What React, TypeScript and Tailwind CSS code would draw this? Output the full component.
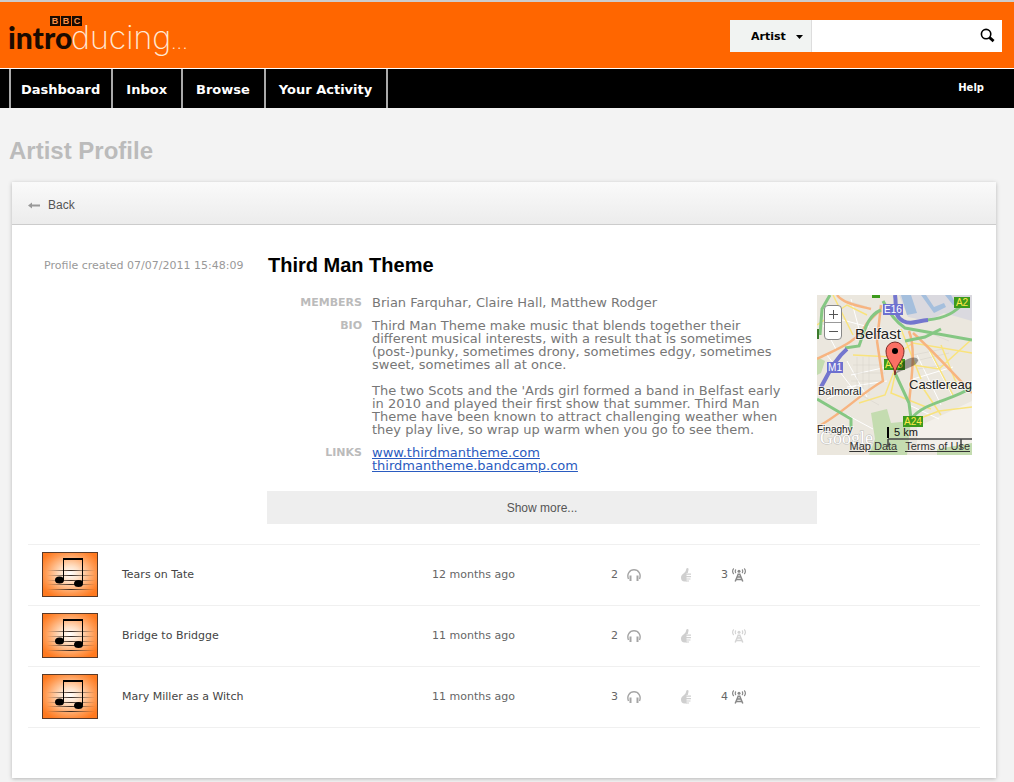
import React from "react";

const members = "Brian Farquhar, Claire Hall, Matthew Rodger";

const tracks = [
  { id: 1, title: "Tears on Tate", age: "12 months ago", listens: 2, plays: 3 },
  { id: 2, title: "Bridge to Bridgge", age: "11 months ago", listens: 2, plays: 0 },
  { id: 3, title: "Mary Miller as a Witch", age: "11 months ago", listens: 3, plays: 4 },
];

const navItems = ["Dashboard", "Inbox", "Browse", "Your Activity"];

const Logo = () => (
  <svg width="190" height="44" viewBox="0 0 190 44" role="img" aria-label="BBC Introducing">
    <text x="-1" y="35" fontSize="30" fontWeight="900" fill="#1a0a00" fontFamily="Lato, sans-serif">intro</text>
    <g fill="#1a0a00">
      <rect x="41" y="2" width="10" height="10" />
      <rect x="52" y="2" width="10" height="10" />
      <rect x="63" y="2" width="10" height="10" />
    </g>
    <g fill="#ff9248" fontSize="9" fontWeight="700" fontFamily="Liberation Sans, sans-serif" textAnchor="middle">
      <text x="46" y="10">B</text>
      <text x="57" y="10">B</text>
      <text x="68" y="10">C</text>
    </g>
    <text x="62" y="35" fontSize="32" fontWeight="200" fill="#ffe8d4" fontFamily="Inter, sans-serif">
      ducing<tspan fontSize="20">...</tspan>
    </text>
  </svg>
);

const NoteArt = () => (
  <svg width="56" height="45" viewBox="0 0 56 45" className="block">
    <defs>
      <radialGradient id="glow" cx="50%" cy="48%" r="60%">
        <stop offset="0" stopColor="#ffffff" />
        <stop offset="0.3" stopColor="#ffdfc4" />
        <stop offset="0.75" stopColor="#ff9a52" />
        <stop offset="1" stopColor="#ff7a20" />
      </radialGradient>
      <linearGradient id="stave" x1="0" x2="1" y1="0" y2="0">
        <stop offset="0" stopColor="#3a2a20" stopOpacity="0" />
        <stop offset="0.5" stopColor="#3a2a20" />
        <stop offset="1" stopColor="#3a2a20" stopOpacity="0" />
      </linearGradient>
    </defs>
    <rect x="0.5" y="0.5" width="55" height="44" fill="url(#glow)" stroke="#5a3a28" />
    <g fill="url(#stave)">
      <rect x="5" y="18" width="48" height="1" />
      <rect x="5" y="23" width="48" height="1" />
      <rect x="5" y="28" width="48" height="1" />
      <rect x="5" y="32" width="48" height="1" />
      <rect x="5" y="37" width="48" height="1" />
    </g>
    <path d="M21.5 28V7M40.5 31V7" stroke="#000" strokeWidth="1" />
    <rect x="21" y="6" width="20" height="2" />
    <ellipse cx="17.5" cy="28" rx="4.5" ry="3.5" />
    <ellipse cx="36.5" cy="31.5" rx="4.5" ry="3.5" />
  </svg>
);

const Headphones = () => (
  <svg width="14" height="12" viewBox="0 0 14 12" fill="none" className="text-[#a5a5a5]">
    <path d="M1.5 10C-.5 5 2.5.8 7 .8S14.5 5 12.5 10" stroke="currentColor" strokeWidth="1.4" />
    <path d="M3.5 6.5V12M10.5 6.5V12" stroke="currentColor" strokeWidth="2" />
  </svg>
);

const Thumb = () => (
  <svg width="11" height="14" viewBox="0 0 11 14" className="text-[#cfcfcf]">
    <path
      d="M6.5 0c1 0 1.2.8 1 1.7L6.8 5H5.5v8.5h-2C1.2 13.5 0 12 0 9.8 0 7.5 1 6.4 2.8 5.2 4.5 4 5 2.5 5.3.8 5.5.2 6 0 6.5 0z"
      fill="currentColor"
    />
    <path d="M5 6.2h5M5 8.6h5M5 11h4.500M5 13h3" stroke="currentColor" strokeWidth="1.200" />
  </svg>
);

const Mast = ({ faded }: { faded: boolean }) => (
  <svg width="14" height="14" viewBox="0 0 14 14" fill="none" className={faded ? "text-[#d4d4d4]" : "text-[#888]"}>
    <g stroke="currentColor">
      <path d="M1.8.5C.2 2 .2 4.5 1.8 6M4 1.5c-1 .8-1 2.7 0 3.5M12.2.5c1.6 1.5 1.6 4 0 5.5M10 1.5c1 .8 1 2.7 0 3.5" strokeWidth="1.2" />
      <path d="M6.5 5.500L3.2 13.500M7.500 5.500l3.300 8M5.300 9h3.400M4 11.500h6" strokeWidth="1.500" />
    </g>
    <circle cx="7" cy="3.3" r="1.5" fill="currentColor" />
  </svg>
);

const MapArt = () => (
  <svg width="155" height="160" viewBox="0 0 155 160" fill="none" className="block" aria-hidden="true">
    <rect width="155" height="160" fill="#ebe7de" />
    <path d="M82 0h73v26l-28-8-16 8-20-4z" fill="#dad9df" />
    <path d="M84 0h10l6 18-10 2zM104 0h5l8 12 10-4 2 4-12 6zM128 0l8 10 3-1-5-9z" fill="#a5bfdd" />
    <path d="M54 118l16-4 4 14 20-2-4 34H52l6-16zM0 62l8 4-4 12-4 2z" fill="#c4dcb0" />
    <path d="M100 132l55-26v50h-55z" fill="#f3f0ea" />
    <path d="M120 154l35-6v12h-35z" fill="#c4dcb0" />
    <g stroke="#fff" strokeWidth="1">
      <path d="M10 60l26 34M30 66l20 36M34 80l36-8M30 92l40-6M6 30l14 26M22 24l30 8M34 4l8 30M100 60l24 50M112 56l24 46M92 110l30 14M10 104l30-14M96 84l40-12M30 120l26 14" />
    </g>
    <g stroke="#d5d1c8" strokeWidth="0.5">
      <path d="M40 62v34M46 62v32M52 60v40M36 70h30M36 78h32M34 86h32M96 60l30-6M98 66l34-8M100 74l28-4M108 36l24 10M8 10l12 10M30 6l20 6M44 100l18 10" />
    </g>
    <g stroke="#f9e37c" strokeWidth="1.5">
      <path d="M0 30l30-20 20 10M36 60l40 2 20-14 59 10M78 74l-10 26-26 8M78 80l-4 18 40 16M96 70l26 4 33-30M104 90l20 30M96 126l26-10 33-4M110 50l26 50M84 34l20 50M16 0l20 40M124 50l16 40" />
    </g>
    <g stroke="#f7b480" strokeWidth="2.5">
      <path d="M20 0c6 8 18 10 34 14M0 64c20-10 40-16 50-36l14-14M0 132c24-12 44-34 66-46l-6-40M92 36c6 16 4 36 0 72M96 38c14 12 40 40 59 60M64 10l-4 36" />
    </g>
    <g stroke="#85c783" strokeWidth="3">
      <path d="M13 0L5 14 3 40M28 53l14-2c6-16 8-30 22-36M66 6c6 12 12 20 22 27l67 12M88 46l20-4 16-8M110 25c20-2 28-8 38-18M78 78l14 30 2 16M94 124c14-18 42-18 61-32M0 104l34 20v10" />
    </g>
    <g stroke="#7476ce" strokeWidth="4">
      <path d="M4 92c8-14 14-28 26-38" />
      <path d="M78 0c2 12-2 20 8 26 8 4 14 0 25-1" />
    </g>
    <g>
      <rect x="66" y="9" width="20" height="11" fill="#6d70cf" />
      <rect x="10" y="67" width="16" height="11" fill="#6d70cf" />
      <rect x="137" y="2" width="16" height="11" fill="#3c9a1c" />
      <rect x="67" y="64" width="21" height="11" fill="#3c9a1c" />
      <rect x="86" y="121" width="20" height="11" fill="#3c9a1c" />
      <rect x="55" y="0" width="8" height="3" fill="#3c9a1c" />
      <rect x="0" y="34" width="2" height="10" fill="#3c7a2c" />
    </g>
    <g fontFamily="Liberation Sans, sans-serif" fontSize="10" textAnchor="middle">
      <text x="76" y="18" fill="#fff">E16</text>
      <text x="18" y="76" fill="#fff">M1</text>
      <text x="145" y="11" fill="#ffe94a">A2</text>
      <text x="77" y="73" fill="#ffe94a">A23</text>
      <text x="96" y="130" fill="#ffe94a">A24</text>
    </g>
    <g fontFamily="Liberation Sans, sans-serif" fill="#222" stroke="#fff" strokeWidth="2" strokeOpacity="0.6" paintOrder="stroke">
      <text x="38" y="44" fontSize="15">Belfast</text>
      <text x="92" y="94" fontSize="13">Castlereag</text>
      <text x="1" y="100" fontSize="11">Balmoral</text>
      <text x="0" y="138" fontSize="10">Finaghy</text>
    </g>
    <text x="3" y="149" fontSize="18" fontFamily="Liberation Serif, serif" fill="#fff" stroke="#aaa" strokeWidth="1" strokeOpacity="0.7" paintOrder="stroke">Google</text>
    <path d="M78 79l8-12c6-5 14-6 15-2 0 6-12 8-23 14z" fill="#000" fillOpacity="0.35" />
    <path d="M78 80c-1-12-9-14-9-24a9 9 0 0 1 18 0c0 10-8 12-9 24z" fill="#fb7064" stroke="#7c2a24" />
    <circle cx="78" cy="56" r="3" fill="#000" />
    <path d="M71 132v11" stroke="#000" strokeWidth="2" />
    <path d="M71 144h84M144 144v10M71 144v8" stroke="#444" strokeWidth="1.5" />
    <text x="77" y="141" fontSize="11" fontFamily="Liberation Sans, sans-serif" fill="#111">5 km</text>
  </svg>
);

const AreaMap = () => (
  <div className="relative mt-[38px] h-[160px] w-[155px] shrink-0 overflow-hidden">
    <MapArt />
    <div className="absolute left-[7px] top-[10px] flex flex-col rounded-sm border border-[#888] bg-white text-[#555]">
      <button type="button" aria-label="Zoom in" className="flex h-[17px] w-4 items-center justify-center border-b border-[#999]">
        <svg width="9" height="9" stroke="currentColor" strokeWidth="1"><path d="M0 4.5h9M4.5 0v9" /></svg>
      </button>
      <button type="button" aria-label="Zoom out" className="flex h-4 w-4 items-center justify-center">
        <svg width="9" height="9" stroke="currentColor" strokeWidth="1"><path d="M0 4.5h9" /></svg>
      </button>
    </div>
    <div className="absolute bottom-[3px] right-[2px] flex gap-2 whitespace-nowrap font-['Liberation_Sans',sans-serif] text-[11px] leading-3 text-[#333] underline">
      <a href="#map-data">Map Data</a>
      <a href="#terms">Terms of Use</a>
    </div>
  </div>
);

const Detail = ({ label, children }: { label: string; children: React.ReactNode }) => (
  <div className="flex gap-[10px]">
    <dt className="w-[95px] shrink-0 text-right text-[11px] font-bold leading-[13px] text-[#bbb]">{label}</dt>
    <dd className="flex-1 pr-6 text-[13px] leading-[13px] text-[#777]">{children}</dd>
  </div>
);

export default function App() {
  return (
    <div className="min-h-screen bg-[#f3f3f3] pb-1 font-['DejaVu_Sans',sans-serif]">
      <header className="flex h-[69px] items-start justify-between border-b border-t-2 border-b-white border-t-[#ccc] bg-[#ff6600] pl-[9px] pr-3">
        <a href="#home" className="mt-3 block">
          <Logo />
        </a>
        <form className="mt-[18px] flex h-8 bg-white" role="search">
          <div className="relative border-r border-[#ddd] bg-[#f1f3f2]">
            <select aria-label="Search type" className="h-8 w-[81px] appearance-none pl-[21px] pt-[2px] text-[11px] font-bold text-black">
              <option>Artist</option>
              <option>Track</option>
            </select>
            <svg width="7" height="4" className="pointer-events-none absolute right-2 top-[15px]">
              <path d="M0 0h7L3.5 4z" />
            </svg>
          </div>
          <input type="text" aria-label="Search" className="w-[160px] px-2 text-[11px] outline-none" />
          <button type="submit" aria-label="Search" className="flex w-[30px] items-center justify-center pb-px">
            <svg width="15" height="15" viewBox="0 0 16 16" fill="none" stroke="#000">
              <circle cx="6.5" cy="6.5" r="5" strokeWidth="1.7" />
              <path d="M10 10l4.5 4" strokeWidth="3" />
            </svg>
          </button>
        </form>
      </header>

      <nav className="flex h-[39px] items-center justify-between bg-black pl-[9px] pr-[30px] font-bold text-white">
        <div className="flex h-full border-l-2 border-[#aaa] text-[13px]">
          {navItems.map((item) => (
            <a key={item} href="#nav" className="flex items-center border-r-2 border-[#aaa] pl-[13px] pr-[14px] pt-[2px] first:pl-[10px] first:pr-[11px]">
              {item}
            </a>
          ))}
        </div>
        <a href="#help" className="pb-[2px] text-[10px]">Help</a>
      </nav>

      <main className="pl-3 pr-[18px]">
        <h1 className="-ml-[3px] pb-[17px] pt-[29px] font-['Liberation_Sans',sans-serif] text-2xl font-bold leading-7 text-[#bbb]">
          Artist Profile
        </h1>
        <section className="bg-white pb-[50px] shadow-[0_1px_4px_rgba(0,0,0,0.25)]">
          <div className="flex h-[43px] items-center border-b border-[#ccc] bg-linear-to-b from-[#fafafa] to-[#ececec] pl-4 pt-1 font-['Liberation_Sans',sans-serif] text-xs text-[#555]">
            <a href="#back" className="flex items-center gap-2">
              <svg width="12" height="7" viewBox="0 0 12 7" fill="#999">
                <path d="M0 3.5L4 .5v2h8v2H4v2z" />
              </svg>
              Back
            </a>
          </div>

          <div className="flex pl-8 pr-6 pt-8">
            <p className="w-[223px] shrink-0 pt-px text-[11px] text-[#999]">Profile created 07/07/2011 15:48:09</p>
            <div className="flex-1">
              <h2 className="pl-px font-['Liberation_Sans',sans-serif] text-xl font-bold leading-4 text-black">Third Man Theme</h2>
              <dl className="mt-[23px] flex flex-col gap-[10px]">
                <Detail label="MEMBERS">{members}</Detail>
                <Detail label="BIO">
                  <p>
                    Third Man Theme make music that blends together their different musical interests, with a result that
                    is sometimes (post-)punky, sometimes drony, sometimes edgy, sometimes sweet, sometimes all at once.
                  </p>
                  <p className="mt-[13px]">
                    The two Scots and the 'Ards girl formed a band in Belfast early in 2010 and played their first show
                    that summer. Third Man Theme have been known to attract challenging weather when they play live, so
                    wrap up warm when you go to see them.
                  </p>
                </Detail>
                <Detail label="LINKS">
                  <a href="#website" className="block text-[#2a5bc0] underline">www.thirdmantheme.com</a>
                  <a href="#bandcamp" className="block text-[#2a5bc0] underline">thirdmantheme.bandcamp.com</a>
                </Detail>
              </dl>
              <button type="button" className="mt-[19px] h-[33px] w-full bg-[#eee] font-['Liberation_Sans',sans-serif] text-xs text-[#555]">
                Show more...
              </button>
            </div>
            <AreaMap />
          </div>

          <div className="px-4 pt-5">
            <table className="w-full table-fixed border-t border-[#f0f0f0] text-[11px] text-[#666]">
              <tbody>
                {tracks.map((track) => (
                  <tr key={track.id} className="h-[61px] border-b border-[#f0f0f0]">
                    <td className="w-[94px] pb-[2px] pl-[14px]"><NoteArt /></td>
                    <td className="w-[310px] text-[#444]">{track.title}</td>
                    <td className="w-[170px]">{track.age}</td>
                    <td className="w-[79px]">
                      <span className="flex items-center gap-[9px] pl-[9px]">{track.listens} <Headphones /></span>
                    </td>
                    <td className="w-[40px]"><Thumb /></td>
                    <td>
                      <span className="flex items-center gap-[3px]">
                        <span className="w-2">{track.plays > 0 ? track.plays : ""}</span>
                        <Mast faded={track.plays === 0} />
                      </span>
                    </td>
                  </tr>
                ))}
              </tbody>
            </table>
          </div>
        </section>
      </main>
    </div>
  );
}
